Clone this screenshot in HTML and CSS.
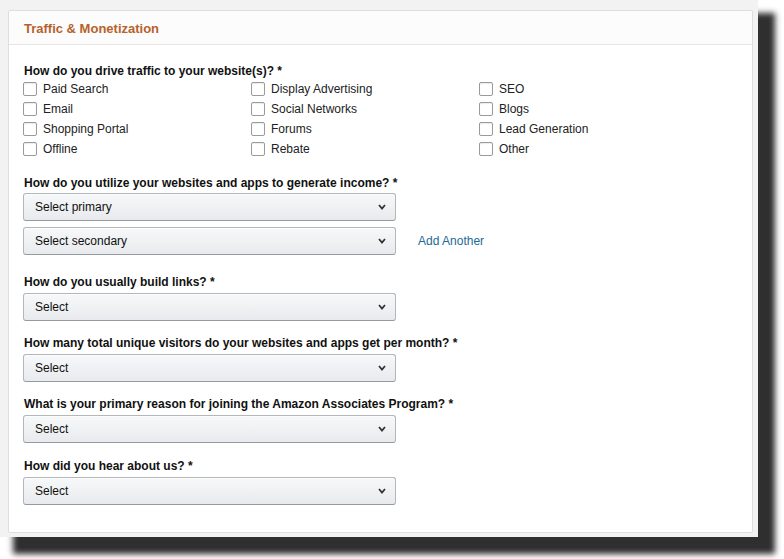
FILE: index.html
```html
<!DOCTYPE html>
<html>
<head>
<meta charset="utf-8">
<link rel="stylesheet" href="styles.css">
</head>
<body>
<div class="frame">
  <div class="card">
    <div class="card-head">Traffic &amp; Monetization</div>
    <div class="card-body">
      <div class="q q-first">How do you drive traffic to your website(s)? *</div>
      <div class="checks">
        <label class="check"><span class="box"></span>Paid Search</label>
        <label class="check"><span class="box"></span>Display Advertising</label>
        <label class="check"><span class="box"></span>SEO</label>
        <label class="check"><span class="box"></span>Email</label>
        <label class="check"><span class="box"></span>Social Networks</label>
        <label class="check"><span class="box"></span>Blogs</label>
        <label class="check"><span class="box"></span>Shopping Portal</label>
        <label class="check"><span class="box"></span>Forums</label>
        <label class="check"><span class="box"></span>Lead Generation</label>
        <label class="check"><span class="box"></span>Offline</label>
        <label class="check"><span class="box"></span>Rebate</label>
        <label class="check"><span class="box"></span>Other</label>
      </div>

      <div class="q q-income">How do you utilize your websites and apps to generate income? *</div>
      <div class="select"><span>Select primary</span><svg class="chev" viewBox="0 0 8 6" width="8" height="6"><polyline points="1,1 4,4.5 7,1" fill="none" stroke="#333" stroke-width="1.8"/></svg></div>
      <div class="select-row">
        <div class="select"><span>Select secondary</span><svg class="chev" viewBox="0 0 8 6" width="8" height="6"><polyline points="1,1 4,4.5 7,1" fill="none" stroke="#333" stroke-width="1.8"/></svg></div>
        <a class="add">Add Another</a>
      </div>

      <div class="q q-links">How do you usually build links? *</div>
      <div class="select"><span>Select</span><svg class="chev" viewBox="0 0 8 6" width="8" height="6"><polyline points="1,1 4,4.5 7,1" fill="none" stroke="#333" stroke-width="1.8"/></svg></div>

      <div class="q">How many total unique visitors do your websites and apps get per month? *</div>
      <div class="select"><span>Select</span><svg class="chev" viewBox="0 0 8 6" width="8" height="6"><polyline points="1,1 4,4.5 7,1" fill="none" stroke="#333" stroke-width="1.8"/></svg></div>

      <div class="q">What is your primary reason for joining the Amazon Associates Program? *</div>
      <div class="select"><span>Select</span><svg class="chev" viewBox="0 0 8 6" width="8" height="6"><polyline points="1,1 4,4.5 7,1" fill="none" stroke="#333" stroke-width="1.8"/></svg></div>

      <div class="q q-last">How did you hear about us? *</div>
      <div class="select"><span>Select</span><svg class="chev" viewBox="0 0 8 6" width="8" height="6"><polyline points="1,1 4,4.5 7,1" fill="none" stroke="#333" stroke-width="1.8"/></svg></div>
    </div>
  </div>
</div>
</body>
</html>
```

FILE: styles.css
```css
html, body {
  margin: 0;
  padding: 0;
  background: #ffffff;
}

body {
  font-family: "Liberation Sans", Arial, sans-serif;
  color: #111;
  min-height: 559px;
  padding-bottom: 22px;
  box-sizing: border-box;
}

.frame {
  width: 758px;
  height: 537px;
  box-sizing: border-box;
  padding: 10px 5px 4px 8px;
  background: #f2f2f2;
  box-shadow: 15px 15px 6px 2px #2f2f2f;
}

.card {
  height: 100%;
  box-sizing: border-box;
  background: #fff;
  border: 1px solid #dedede;
  border-radius: 2px;
}

.card-head {
  height: 34px;
  box-sizing: border-box;
  padding: 10px 15px 0;
  border-bottom: 1px solid #e6e6e6;
  font-size: 13px;
  line-height: 16px;
  font-weight: bold;
  color: #b5622c;
  background: #fcfcfc;
}

.card-body {
  display: flex;
  flex-direction: column;
  align-items: flex-start;
  padding: 0 15px;
}

.q {
  font-size: 12px;
  line-height: 16px;
  font-weight: bold;
  color: #111;
  margin-top: 14px;
  margin-bottom: 3px;
}

.q-first {
  margin-top: 18px;
  margin-bottom: 0;
}

.q-income {
  margin-top: 16px;
  margin-bottom: 2px;
}

.q-links {
  margin-top: 19px;
}

.q-last {
  margin-top: 15px;
}

.checks {
  display: grid;
  grid-template-columns: 228px 228px 228px;
  grid-auto-rows: 20px;
}

.check {
  display: flex;
  align-items: center;
  gap: 6px;
  font-size: 12px;
  color: #222;
}

.box {
  width: 12px;
  height: 12px;
  border: 1px solid #9a9a9a;
  border-radius: 2px;
  background: #fff;
  box-shadow: inset 0 1px 1px rgba(0,0,0,0.08);
  margin-left: -1px;
}

.select {
  width: 373px;
  height: 28px;
  box-sizing: border-box;
  margin-left: -1px;
  display: flex;
  align-items: center;
  justify-content: space-between;
  padding: 0 9px 0 11px;
  border: 1px solid #b3b6bb;
  border-bottom-color: #959aa1;
  border-radius: 3px;
  background: linear-gradient(#f7f8fa, #e8eaed);
  box-shadow: inset 0 1px 0 rgba(255,255,255,0.7);
  font-size: 12px;
  color: #111;
}

.select-row {
  display: flex;
  align-items: center;
  margin-top: 6px;
}

.add {
  margin-left: 22px;
  font-size: 12px;
  color: #1c6a94;
}
```
